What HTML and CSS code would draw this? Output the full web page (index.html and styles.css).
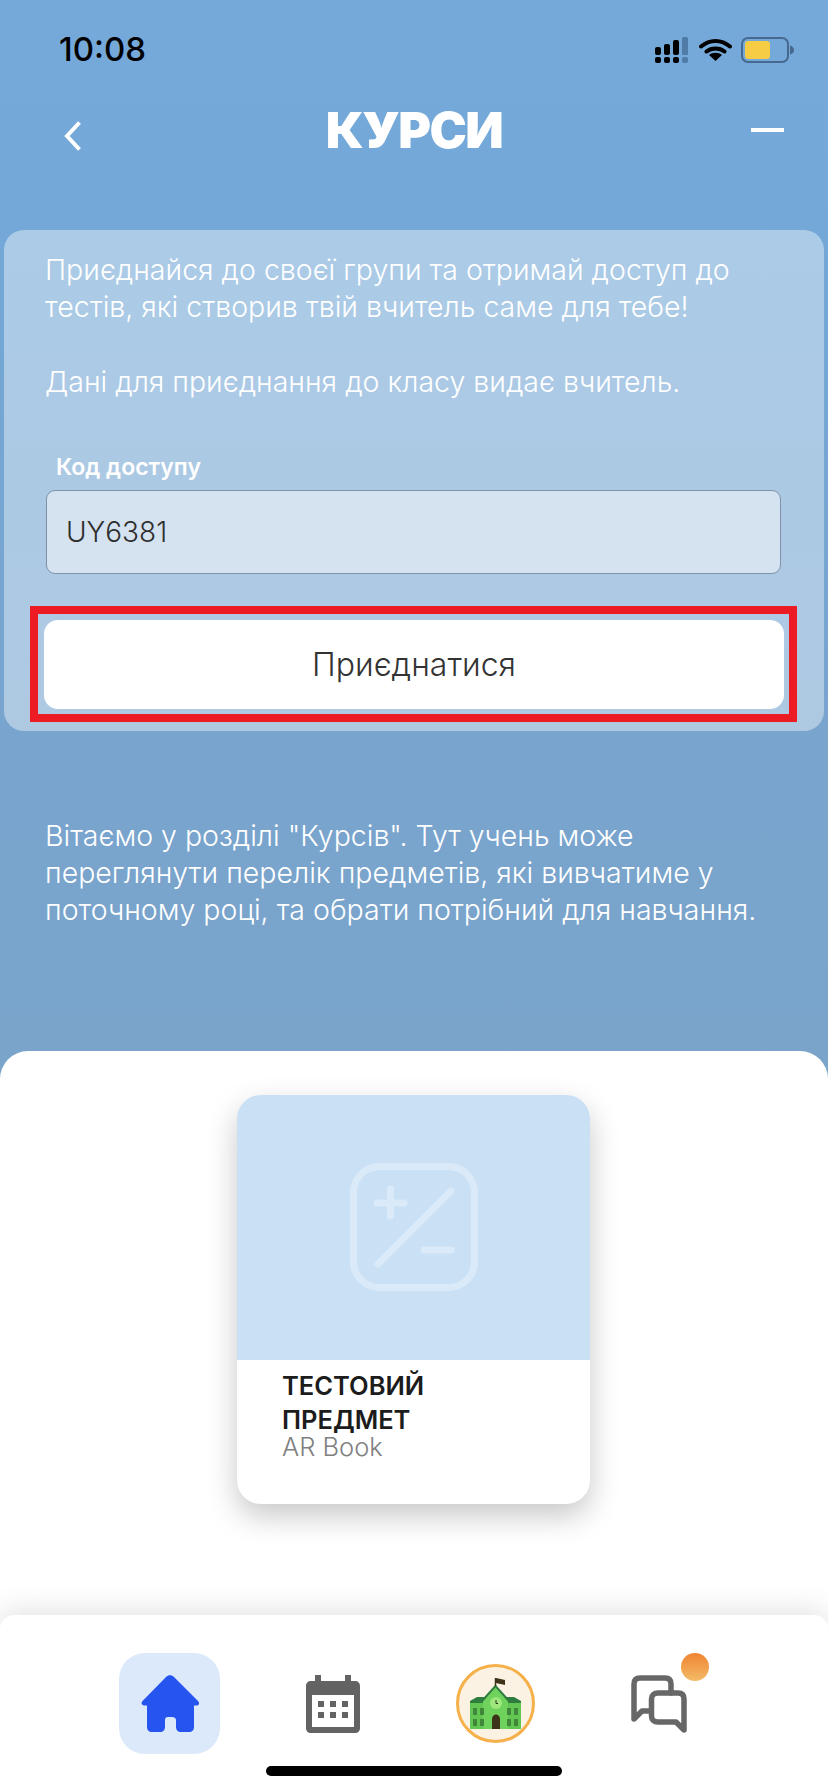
FILE: index.html
```html
<!DOCTYPE html>
<html lang="uk">
<head>
  <meta charset="UTF-8">
  <title>Курси</title>
  <link rel="stylesheet" href="styles.css">
</head>
<body>
  <div class="page">
    <!-- status bar -->
    <div class="status-bar">
      <span class="time">10:08</span>
      <div class="status-icons">
        <svg class="signal" width="33" height="26" viewBox="0 0 33 26">
          <g fill="#000">
            <rect x="0" y="10" width="6" height="8" rx="2"/>
            <rect x="9" y="7" width="6" height="11" rx="2"/>
            <rect x="18" y="3" width="6" height="15" rx="2"/>
            <rect x="0" y="20" width="6" height="6" rx="2"/>
            <rect x="9" y="20" width="6" height="6" rx="2"/>
            <rect x="18" y="20" width="6" height="6" rx="2"/>
          </g>
          <g fill="#4f7ba6">
            <rect x="27" y="0" width="6" height="18" rx="1.5"/>
            <rect x="27" y="20" width="6" height="6" rx="2"/>
          </g>
        </svg>
        <svg class="wifi" width="33" height="23" viewBox="0 0 33 23">
          <path d="M2 8.500C10.500 1 22.500 1 31 8.500M7.500 13.500C12.500 9.500 20.500 9.500 25.500 13.500" fill="none" stroke="#000" stroke-width="4" stroke-linecap="round"/>
          <path d="M16.500 23L10 17C13.500 14 19.500 14 23 17Z" fill="#000"/>
        </svg>
        <svg class="battery" width="53" height="26" viewBox="0 0 53 26">
          <rect x="1" y="1" width="46" height="24" rx="6" fill="none" stroke="#47698f" stroke-width="2"/>
          <rect x="4" y="4" width="25" height="18" rx="3" fill="#f6cc45"/>
          <path d="M49 8.500C52 9.500 53 11 53 13C53 15 52 16.500 49 17.500Z" fill="#47698f"/>
        </svg>
      </div>
    </div>

    <!-- header -->
    <div class="header">
      <svg class="back" width="18" height="30" viewBox="0 0 18 30">
        <path d="M15.500 1.500L3 15L15.500 28.500" fill="none" stroke="#fff" stroke-width="4"/>
      </svg>
      <h1>КУРСИ</h1>
      <div class="minus"></div>
    </div>

    <!-- join panel -->
    <div class="panel">
      <p class="panel-text">Приєднайся до своєї групи та отримай доступ до<br>тестів, які створив твій вчитель саме для тебе!</p>
      <p class="panel-text second">Дані для приєднання до класу видає вчитель.</p>
      <label class="code-label" for="code">Код доступу</label>
      <input class="code-input" id="code" type="text" value="UY6381">
      <div class="highlight">
        <button class="join-btn" type="button">Приєднатися</button>
      </div>
    </div>

    <p class="welcome">Вітаємо у розділі "Курсів". Тут учень може<br>переглянути перелік предметів, які вивчатиме у<br>поточному році, та обрати потрібний для навчання.</p>

    <!-- white sheet -->
    <div class="sheet">
      <div class="card">
        <div class="card-cover">
          <svg width="128" height="128" viewBox="0 0 128 128">
            <g fill="none" stroke="#dbeaf8" stroke-width="7" stroke-linecap="round">
              <rect x="3.500" y="3.500" width="121" height="121" rx="26"/>
              <path d="M27 40H54M40.500 26V53M101 28L28 101M74 87H101"/>
            </g>
          </svg>
        </div>
        <div class="card-body">
          <div class="card-title">ТЕСТОВИЙ<br>ПРЕДМЕТ</div>
          <div class="card-sub">AR Book</div>
        </div>
      </div>
    </div>

    <!-- bottom nav -->
    <div class="nav">
      <div class="nav-item active">
        <svg width="58" height="58" viewBox="0 0 58 58">
          <path d="M25 2L1.500 26C-.5 28 1 31 4 30.500H6V52C6 55 8 57 11 57H19C22 57 24 55 24 52V45C24 43 25 42 27 42H31C33 42 35 43 35 45V52C35 55 37 57 40 57H48C51 57 53 55 53 52V30.500H55C58 31 59 28 57 26L33 2C30.500 -.5 27.500 -.5 25 2Z" fill="#2554ee"/>
        </svg>
      </div>
      <div class="nav-item">
        <svg width="54" height="58" viewBox="0 0 54 58">
          <path d="M9 0H15V6H39V0H45V6H49C52 6 54 8 54 11V53C54 56 52 58 49 58H5C2 58 0 56 0 53V11C0 8 2 6 5 6H9ZM6 20V52H48V20Z" fill="#636363" fill-rule="evenodd"/>
          <g fill="#636363">
            <rect x="12" y="26" width="6" height="6"/>
            <rect x="24" y="26" width="6" height="6"/>
            <rect x="36" y="26" width="6" height="6"/>
            <rect x="12" y="37" width="6" height="6"/>
            <rect x="24" y="37" width="6" height="6"/>
            <rect x="36" y="37" width="6" height="6"/>
          </g>
        </svg>
      </div>
      <div class="nav-item">
        <svg width="79" height="79" viewBox="0 0 79 79">
          <circle cx="39.500" cy="39.500" r="38" fill="#fbf2e4" stroke="#f5b04a" stroke-width="3"/>
          <path d="M14 37L21 33H36L39.500 22L43 33H58L65 37V50H14Z" fill="#2f7d3e"/>
          <rect x="14" y="39" width="51" height="26" fill="#62c653"/>
          <path d="M27 37L39.500 23L52 37V65H27Z" fill="#6fd25c"/>
          <path d="M26 37L39.500 22L53 37" fill="none" stroke="#2f7d3e" stroke-width="2"/>
          <circle cx="40" cy="39" r="6" fill="#9fe67c"/>
          <path d="M40 36V39.500H42" fill="none" stroke="#263b1f" stroke-width="1"/>
          <path d="M36 65V55C36 49 44 49 44 55V65Z" fill="#3d3319"/>
          <path d="M39.500 22V14" stroke="#3d3319" stroke-width="1.500"/>
          <path d="M40 14L49 16V21L40 19Z" fill="#3d3319"/>
          <g fill="#41873a">
            <rect x="17" y="44" width="4" height="7"/>
            <rect x="24" y="44" width="4" height="7"/>
            <rect x="17" y="55" width="4" height="7"/>
            <rect x="24" y="55" width="4" height="7"/>
            <rect x="51" y="44" width="4" height="7"/>
            <rect x="58" y="44" width="4" height="7"/>
            <rect x="51" y="55" width="4" height="7"/>
            <rect x="58" y="55" width="4" height="7"/>
          </g>
        </svg>
      </div>
      <div class="nav-item">
        <svg width="56" height="58" viewBox="0 0 56 58">
          <g fill="none" stroke="#676767" stroke-width="5.500" stroke-linejoin="round" stroke-linecap="round">
            <path d="M40 18V9C40 5 38 3 34 3H9C5 3 3 5 3 9V44L11 36H20"/>
            <path d="M27 18H47C51 18 53 20 53 24V55L45 47H27C23 47 20.500 45 20.500 41V24C20.500 20 23 18 27 18Z"/>
          </g>
        </svg>
        <span class="dot"></span>
      </div>
      <div class="home-indicator"></div>
    </div>
  </div>
</body>
</html>
```

FILE: styles.css
```css
body {
  margin: 0;
  font-family: "Inter", "Noto Sans", sans-serif;
}

.page {
  position: relative;
  display: flex;
  flex-direction: column;
  width: 828px;
  height: 1792px;
  overflow: hidden;
  background: linear-gradient(180deg, #74a9da 0%, #73a8d8 200px, #79a4cd 800px, #7aa4ca 1051px);
}

.status-bar {
  display: flex;
  justify-content: space-between;
  height: 80px;
  box-sizing: border-box;
  padding: 30px 34px 0 59px;
}

.time {
  font-size: 33px;
  font-weight: 500;
  line-height: 38px;
  color: #000;
}

.status-icons {
  display: flex;
  align-items: flex-start;
  padding-top: 7px;
}

.wifi {
  margin: 1px 9px 0 11px;
}

.header {
  display: grid;
  grid-template-columns: 1fr auto 1fr;
  align-items: start;
  height: 150px;
  padding: 0 44px;
  box-sizing: border-box;
}

.back {
  margin: 41px 0 0 20px;
}

h1 {
  margin: 20px 0 0;
  font-size: 50px;
  font-weight: 900;
  line-height: 60px;
  letter-spacing: -1.5px;
  color: #fff;
}

.minus {
  justify-self: end;
  width: 33px;
  height: 4px;
  margin-top: 48px;
  background-color: #fff;
}

.panel {
  display: flex;
  flex-direction: column;
  height: 501px;
  margin: 0 4px;
  padding: 21px 27px 0 26px;
  box-sizing: border-box;
  background-color: rgba(255, 255, 255, 0.4);
  border-radius: 20px;
}

.panel-text {
  margin: 0 15px;
  font-size: 28.5px;
  font-weight: 300;
  line-height: 37px;
  color: #fff;
}

.panel-text.second {
  margin-top: 38px;
}

.code-label {
  margin: 53px 0 0 26px;
  font-size: 23px;
  font-weight: 600;
  line-height: 28px;
  color: #fff;
}

.code-input {
  height: 84px;
  margin: 9px 16px 0 16px;
  padding: 0 19px;
  box-sizing: border-box;
  font-family: inherit;
  font-size: 28px;
  font-weight: 300;
  color: #2e2e2e;
  background-color: #d5e3f0;
  border: 1px solid #7f93a8;
  border-radius: 9px;
}

.highlight {
  height: 116px;
  margin: 32px 0 0;
  padding: 6px 5px 5px 6px;
  box-sizing: border-box;
  border: 8px solid #ed1c24;
}

.join-btn {
  display: block;
  width: 100%;
  height: 89px;
  font-family: inherit;
  font-size: 32px;
  font-weight: 300;
  color: #333;
  background-color: #fff;
  border: none;
  border-radius: 14px;
}

.welcome {
  margin: 86px 45px 0;
  font-size: 28.5px;
  font-weight: 300;
  line-height: 37px;
  color: #fff;
}

.sheet {
  position: absolute;
  left: 0;
  top: 1051px;
  width: 828px;
  height: 741px;
  padding-top: 44px;
  box-sizing: border-box;
  background-color: #fff;
  border-radius: 28px 28px 0 0;
}

.card {
  width: 353px;
  height: 409px;
  margin-left: 237px;
  overflow: hidden;
  background-color: #fff;
  border-radius: 24px;
  box-shadow: 0 12px 30px rgba(0, 0, 0, 0.22);
}

.card-cover {
  display: flex;
  justify-content: center;
  padding-top: 68px;
  height: 265px;
  box-sizing: border-box;
  background-color: #c9e0f5;
}

.card-body {
  padding: 9px 45px 0;
}

.card-title {
  font-size: 25.5px;
  font-weight: 600;
  line-height: 34px;
  color: #1c1c1c;
}

.card-sub {
  font-size: 25.5px;
  font-weight: 300;
  line-height: 20px;
  color: #808080;
}

.nav {
  position: absolute;
  left: 0;
  bottom: 0;
  display: grid;
  grid-template-columns: repeat(4, 163px);
  justify-items: center;
  width: 828px;
  height: 177px;
  box-sizing: border-box;
  padding: 38px 88px 0;
  background-color: #fff;
  border-radius: 14px 14px 0 0;
  box-shadow: 0 -4px 30px rgba(0, 0, 0, 0.12);
}

.nav-item {
  position: relative;
  display: flex;
  align-items: center;
  justify-content: center;
  width: 101px;
  height: 101px;
}

.nav-item.active {
  background-color: #dce9fb;
  border-radius: 26px;
}

.dot {
  position: absolute;
  top: 0;
  right: 0;
  width: 28px;
  height: 28px;
  border-radius: 50%;
  background: linear-gradient(180deg, #ef8431, #f4bb67);
}

.home-indicator {
  position: absolute;
  left: 266px;
  bottom: 16px;
  width: 296px;
  height: 10px;
  background-color: #000;
  border-radius: 5px;
}
```
